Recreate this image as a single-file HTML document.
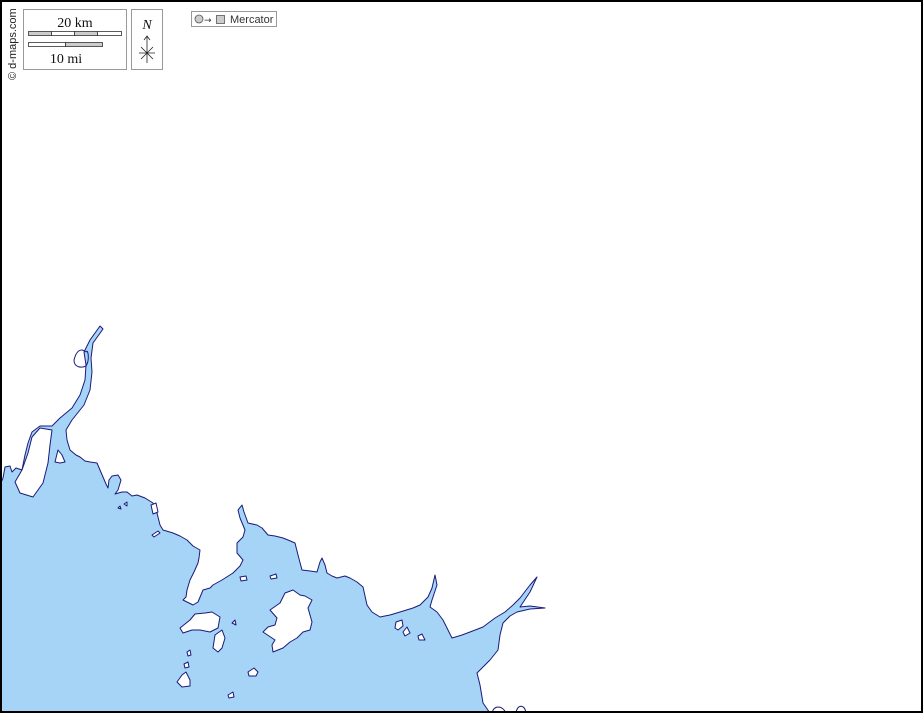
<!DOCTYPE html>
<html><head><meta charset="utf-8"><style>
html,body{margin:0;padding:0;background:#fff;}
svg{display:block;}
</style></head><body>
<svg width="923" height="713" viewBox="0 0 923 713" xmlns="http://www.w3.org/2000/svg">
<rect x="0" y="0" width="923" height="713" fill="#fff"/>
<g stroke="#1a1a7a" stroke-width="1" stroke-linejoin="round">
<polygon fill="#a6d4f6" points="0,485 3,478 5,467 10,466 12,472 16,468 22,470 25,455 28,443 32,432 40,426 52,426 60,418 72,408 80,395 85,380 86,365 84,352 90,340 100,326 103,329 93,343 91,358 92,372 90,390 84,405 72,420 66,430 67,440 70,450 76,455 80,457 85,461 90,462 97,463 100,470 103,477 106,484 108,488 109,480 112,476 118,475 121,480 118,490 115,494 122,492 127,492 132,496 137,495 145,498 153,503 157,513 160,525 163,530 173,533 180,536 187,540 193,546 200,550 199,558 198,563 194,572 190,580 187,590 186,597 183,600 193,605 198,602 203,590 210,588 213,585 222,580 233,573 240,566 243,560 237,553 237,543 243,537 245,530 240,518 238,510 242,505 244,512 248,523 257,525 262,528 268,535 275,536 283,538 288,540 295,543 298,555 302,570 310,571 317,572 320,562 322,558 325,565 327,573 332,576 337,578 345,576 350,578 357,582 363,587 365,596 367,605 372,612 380,617 390,615 400,612 413,608 420,605 428,597 432,588 435,575 437,585 432,600 430,607 437,612 443,620 448,630 452,638 462,635 470,632 483,627 495,618 505,612 513,605 520,598 530,585 537,577 530,592 520,607 530,606 545,608 530,609 517,612 510,616 503,623 500,635 498,650 490,660 482,668 477,673 480,685 483,703 490,713 0,713"/>
<polygon fill="#fff" points="15,482 22,470 28,453 32,437 40,428 52,430 50,445 48,463 43,483 33,497 20,493"/>
<path d="M86,352 C80,347 76,352 74,360 C74,368 82,368 86,366 C90,360 88,348 86,352 Z" fill="none" stroke="#1a1a7a"/>
<polygon fill="#fff" points="55,462 58,450 62,455 65,462 60,463"/>
<polygon fill="#fff" points="270,610 280,603 285,593 293,590 300,595 305,596 312,600 308,608 312,622 310,630 303,632 297,638 290,642 283,648 273,652 272,645 275,640 269,636 263,632 268,627 275,625 277,618"/>
<polygon fill="#fff" points="180,628 190,620 195,614 205,613 212,612 220,617 218,628 210,632 200,630 192,630 183,633"/>
<polygon fill="#fff" points="215,635 222,630 225,638 222,648 218,652 213,648"/>
<polygon fill="#fff" points="177,682 182,675 186,672 190,680 190,686 182,687"/>
<polygon fill="#fff" points="248,672 254,668 258,672 256,676 249,676"/>
<polygon fill="#fff" points="228,695 233,692 234,697 229,698"/>
<polygon fill="#fff" points="396,622 402,620 403,626 398,630 395,628"/>
<polygon fill="#fff" points="403,632 407,627 410,633 405,636"/>
<polygon fill="#fff" points="418,636 422,634 425,640 419,640"/>
<polygon fill="#fff" points="270,576 276,574 277,578 271,579"/>
<polygon fill="#fff" points="240,577 246,576 247,580 241,581"/>
<polygon fill="#fff" points="152,535 158,531 160,533 154,537"/>
<polygon fill="#fff" points="187,652 190,650 191,655 188,656"/>
<polygon fill="#fff" points="184,664 188,662 189,667 185,668"/>
<polygon fill="#fff" points="232,623 235,620 236,625"/>
<polygon fill="#fff" points="124,504 127,502 127,506"/>
<polygon fill="#fff" points="118,508 120,506 121,509"/>
<polygon fill="#fff" points="151,505 156,503 158,512 153,514"/>
<path d="M492,713 C494,705 502,705 506,713" fill="#fff"/>
<path d="M516,713 C517,704 525,704 526,713" fill="#fff"/>
</g>
<!-- frame -->
<rect x="1" y="1" width="921" height="711" fill="none" stroke="#000" stroke-width="2"/>
<!-- copyright -->
<text transform="translate(16,80) rotate(-90)" font-family="Liberation Sans, sans-serif" font-size="11" fill="#222">© d-maps.com</text>
<!-- scale -->
<rect x="23.5" y="9.5" width="103" height="60" fill="#fff" stroke="#999"/>
<text x="75" y="27" text-anchor="middle" font-family="Liberation Serif, serif" font-size="14" fill="#111">20 km</text>
<g stroke="#333" stroke-width="0.8">
<rect x="28.5" y="31.5" width="23" height="4" fill="#ccc"/>
<rect x="51.5" y="31.5" width="23" height="4" fill="#fff"/>
<rect x="74.5" y="31.5" width="23" height="4" fill="#ccc"/>
<rect x="97.5" y="31.5" width="24" height="4" fill="#fff"/>
<rect x="28.5" y="42.5" width="37" height="4" fill="#fff"/>
<rect x="65.5" y="42.5" width="37" height="4" fill="#ccc"/>
</g>
<text x="66" y="63" text-anchor="middle" font-family="Liberation Serif, serif" font-size="14" fill="#111">10 mi</text>
<rect x="131.5" y="9.5" width="31" height="60" fill="#fff" stroke="#999"/>
<text x="147" y="29" text-anchor="middle" font-family="Liberation Serif, serif" font-style="italic" font-size="14" fill="#111">N</text>
<g stroke="#222" stroke-width="0.8" fill="none">
<path d="M147,63 V36 M144,40 L147,36 L150,40"/>
<path d="M139,53 H155 M141,47 L153,59 M153,47 L141,59"/>
</g>
<!-- mercator -->
<rect x="191.5" y="11.5" width="85" height="15" fill="#fff" stroke="#999"/>
<circle cx="199" cy="19" r="4" fill="#ccc" stroke="#555" stroke-width="0.8"/>
<text x="204" y="23" font-family="DejaVu Sans, sans-serif" font-size="9" fill="#333">→</text>
<rect x="216.5" y="15.5" width="8" height="8" fill="#ccc" stroke="#555" stroke-width="0.8"/>
<text x="230" y="23" font-family="Liberation Sans, sans-serif" font-size="11" fill="#333">Mercator</text>
</svg>
</body></html>
